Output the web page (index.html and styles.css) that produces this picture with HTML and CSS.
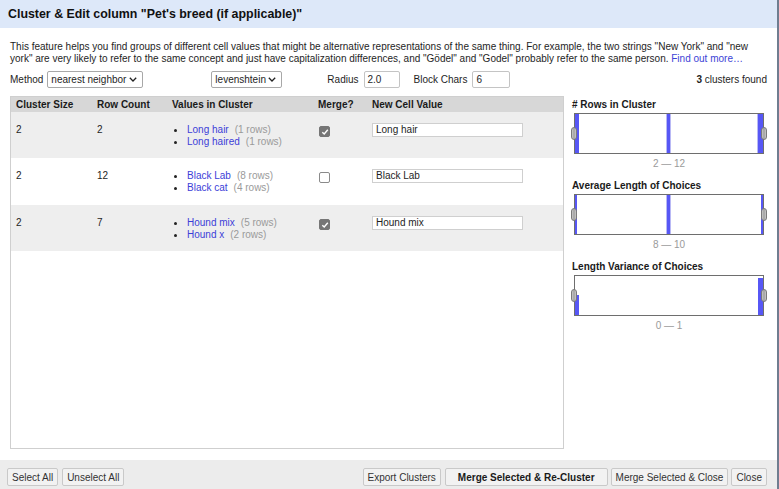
FILE: index.html
```html
<!DOCTYPE html>
<html>
<head>
<meta charset="utf-8">
<link rel="stylesheet" href="styles.css">
</head>
<body>
<div class="dialog">
  <div class="title">Cluster &amp; Edit column "Pet's breed (if applicable)"</div>
  <div class="content">
    <p class="desc">This feature helps you find groups of different cell values that might be alternative representations of the same thing. For example, the two strings "New York" and "new york" are very likely to refer to the same concept and just have capitalization differences, and "Gödel" and "Godel" probably refer to the same person. <a href="#" class="link">Find out more…</a></p>
    <div class="controls">
      <span class="label">Method</span>
      <span class="select sel-method"><span>nearest neighbor</span><svg width="8" height="5" viewBox="0 0 8 5"><path d="M0.8 0.8 L4 4 L7.2 0.8" fill="none" stroke="#222" stroke-width="1.3"/></svg></span>
      <span class="select sel-func"><span>levenshtein</span><svg width="8" height="5" viewBox="0 0 8 5"><path d="M0.8 0.8 L4 4 L7.2 0.8" fill="none" stroke="#222" stroke-width="1.3"/></svg></span>
      <span class="label lbl-radius">Radius</span>
      <span class="tinput in-radius">2.0</span>
      <span class="label lbl-block">Block Chars</span>
      <span class="tinput in-block">6</span>
      <span class="found"><b>3</b> clusters found</span>
    </div>
    <div class="main">
      <div class="table-wrap">
        <table class="clusters">
          <colgroup><col class="c1"><col class="c2"><col class="c3"><col class="c4"><col class="c5"></colgroup>
          <thead>
            <tr><th>Cluster Size</th><th>Row Count</th><th>Values in Cluster</th><th>Merge?</th><th>New Cell Value</th></tr>
          </thead>
          <tbody>
            <tr class="odd">
              <td>2</td><td>2</td>
              <td><ul class="vals"><li><a href="#">Long hair</a><span class="cnt">(1 rows)</span></li><li><a href="#">Long haired</a><span class="cnt">(1 rows)</span></li></ul></td>
              <td><span class="cb checked"><svg width="8" height="8" viewBox="0 0 8 8"><path d="M1.3 4.2 L3.2 6 L6.8 1.8" fill="none" stroke="#fff" stroke-width="1.4"/></svg></span></td>
              <td><span class="cell-input">Long hair</span></td>
            </tr>
            <tr class="even">
              <td>2</td><td>12</td>
              <td><ul class="vals"><li><a href="#">Black Lab</a><span class="cnt">(8 rows)</span></li><li><a href="#">Black cat</a><span class="cnt">(4 rows)</span></li></ul></td>
              <td><span class="cb"></span></td>
              <td><span class="cell-input">Black Lab</span></td>
            </tr>
            <tr class="odd">
              <td>2</td><td>7</td>
              <td><ul class="vals"><li><a href="#">Hound mix</a><span class="cnt">(5 rows)</span></li><li><a href="#">Hound x</a><span class="cnt">(2 rows)</span></li></ul></td>
              <td><span class="cb checked"><svg width="8" height="8" viewBox="0 0 8 8"><path d="M1.3 4.2 L3.2 6 L6.8 1.8" fill="none" stroke="#fff" stroke-width="1.4"/></svg></span></td>
              <td><span class="cell-input">Hound mix</span></td>
            </tr>
          </tbody>
        </table>
      </div>
      <div class="facets">
        <div class="facet">
          <div class="facet-title"># Rows in Cluster</div>
          <div class="hist">
            <svg width="190" height="41" viewBox="0 0 190 41">
              <rect x="0.5" y="0.5" width="189" height="40" fill="#fff" stroke="#6e6e6e"/>
              <rect x="1" y="1" width="4" height="39" fill="#5757f5"/>
              <rect x="92" y="1" width="5" height="39" fill="#b9b9f5"/>
              <rect x="93" y="1" width="3" height="39" fill="#5757f5"/>
              <rect x="184" y="1" width="5" height="39" fill="#5757f5"/>
              <rect x="183" y="1" width="1" height="39" fill="#b9b9f5"/>
            </svg>
            <span class="handle h-left"></span><span class="handle h-right"></span>
          </div>
          <div class="range">2 — 12</div>
        </div>
        <div class="facet">
          <div class="facet-title">Average Length of Choices</div>
          <div class="hist">
            <svg width="190" height="41" viewBox="0 0 190 41">
              <rect x="0.5" y="0.5" width="189" height="40" fill="#fff" stroke="#6e6e6e"/>
              <rect x="1" y="1" width="2" height="39" fill="#5757f5"/>
              <rect x="92" y="1" width="5" height="39" fill="#b9b9f5"/>
              <rect x="93" y="1" width="3" height="39" fill="#5757f5"/>
              <rect x="187" y="1" width="2" height="39" fill="#5757f5"/>
            </svg>
            <span class="handle h-left"></span><span class="handle h-right"></span>
          </div>
          <div class="range">8 — 10</div>
        </div>
        <div class="facet">
          <div class="facet-title">Length Variance of Choices</div>
          <div class="hist">
            <svg width="190" height="41" viewBox="0 0 190 41">
              <rect x="0.5" y="0.5" width="189" height="40" fill="#fff" stroke="#6e6e6e"/>
              <rect x="1" y="20" width="4" height="20" fill="#5757f5"/>
              <rect x="184" y="3" width="5" height="37" fill="#5757f5"/>
            </svg>
            <span class="handle h-left"></span><span class="handle h-right"></span>
          </div>
          <div class="range">0 — 1</div>
        </div>
      </div>
    </div>
  </div>
  <div class="footer">
    <button class="btn">Select All</button>
    <button class="btn btn-unselect">Unselect All</button>
    <span class="spacer"></span>
    <button class="btn">Export Clusters</button>
    <button class="btn primary">Merge Selected &amp; Re-Cluster</button>
    <button class="btn">Merge Selected &amp; Close</button>
    <button class="btn">Close</button>
  </div>
</div>
</body>
</html>
```
FILE: styles.css
```css
html, body {
  margin: 0;
  padding: 0;
  background: #fff;
}
body {
  font-family: "Liberation Sans", Arial, sans-serif;
  font-size: 10px;
  color: #1e1e1e;
}
.dialog {
  width: 777px;
  height: 489px;
  border-right: 2px solid #6f7d90;
  display: flex;
  flex-direction: column;
  background: #fff;
}
.title {
  height: 28px;
  line-height: 29px;
  background: #dde8f9;
  padding-left: 8px;
  font-weight: bold;
  font-size: 12.4px;
  color: #111;
}
.content {
  flex: 1;
  display: flex;
  flex-direction: column;
  padding: 13px 10px 11px 10px;
  min-height: 0;
}
.desc {
  margin: 0;
  line-height: 12px;
}
.link {
  color: #3b43d6;
  text-decoration: none;
}
.controls {
  display: flex;
  align-items: center;
  height: 17px;
  margin-top: 6px;
}
.label { margin-right: 4px; }
.select {
  position: relative;
  display: inline-flex;
  align-items: center;
  justify-content: space-between;
  height: 15px;
  border: 1px solid #a8a8a8;
  border-radius: 2px;
  background: #fff;
  padding: 0 5px 0 3px;
  box-sizing: content-box;
}
.sel-method { width: 86px; }
.sel-func { width: 61px; margin-left: 68px; }
.lbl-radius { margin-left: 45px; margin-right: 5px; }
.tinput {
  display: inline-flex;
  align-items: center;
  height: 15px;
  border: 1px solid #c4c4c4;
  border-radius: 2px;
  padding-left: 3px;
  background: #fff;
}
.in-radius { width: 31px; }
.lbl-block { margin-left: 14px; margin-right: 5px; }
.in-block { width: 33px; }
.found { margin-left: auto; }
.main {
  flex: 1;
  display: flex;
  margin-top: 8px;
  min-height: 0;
}
.table-wrap {
  width: 552px;
  border: 1px solid #cfcfcf;
  background: #fff;
}
.clusters {
  width: 552px;
  border-collapse: collapse;
  table-layout: fixed;
}
.c1 { width: 81px; }
.c2 { width: 75px; }
.c3 { width: 146px; }
.c4 { width: 54px; }
.clusters th {
  background: #d7d7d7;
  text-align: left;
  font-weight: bold;
  padding: 0 5px;
  height: 15px;
  line-height: 15px;
  color: #1a1a1a;
}
.clusters td {
  vertical-align: top;
  padding: 12px 5px 0 5px;
  line-height: 12px;
}
.clusters tbody tr { height: 46px; }
.clusters tbody tr.even { height: 47px; }
.clusters tr.odd td { background: #eeeeee; }
.clusters tr.even td { background: #fff; }
.vals {
  list-style: none;
  margin: 0;
  padding: 0;
}
.vals li {
  display: flex;
  align-items: center;
  height: 12px;
}
.vals li::before {
  content: "";
  width: 3px;
  height: 3px;
  border-radius: 50%;
  background: #222;
  margin: 0 10px 0 2px;
}
.vals a {
  color: #3c3ed8;
  text-decoration: none;
}
.cnt {
  color: #9a9a9a;
  margin-left: 6px;
}
.cb {
  display: inline-flex;
  align-items: center;
  justify-content: center;
  width: 9px;
  height: 9px;
  border: 1px solid #8a8a8a;
  border-radius: 2px;
  background: #fff;
  margin: 2px 0 0 1px;
}
.cb.checked {
  background: #767676;
  border-color: #767676;
}
.cell-input {
  display: flex;
  align-items: center;
  width: 146px;
  height: 12px;
  margin-top: -1px;
  border: 1px solid #cfcfcf;
  background: #fff;
  padding-left: 3px;
}
.facets {
  margin-left: 8px;
  padding-top: 3px;
  width: 196px;
}
.facet { margin-bottom: 10px; }
.facet-title {
  font-weight: bold;
  line-height: 12px;
  color: #1a1a1a;
}
.hist {
  position: relative;
  width: 190px;
  height: 41px;
  margin: 2px 0 0 2px;
}
.hist svg { display: block; }
.handle {
  position: absolute;
  top: 14px;
  width: 4px;
  height: 11px;
  border: 1px solid #7a7a7a;
  border-radius: 3px;
  background: linear-gradient(to right, #c9c9c9, #a0a0a0 50%, #c9c9c9);
}
.h-left { left: -3px; }
.h-right { right: -3px; }
.range {
  width: 190px;
  margin: 4px 0 0 2px;
  text-align: center;
  color: #9a9a9a;
  line-height: 12px;
}
.footer {
  height: 29px;
  background: #ececec;
  display: flex;
  align-items: center;
  padding: 0 10px 0 7px;
  gap: 3px;
}
.spacer { flex: 1; }
.btn {
  font-family: "Liberation Sans", Arial, sans-serif;
  font-size: 10px;
  color: #333;
  height: 18px;
  padding: 0 4px;
  background: #f2f2f2;
  border: 1px solid #c9c9c9;
  border-radius: 2px;
  margin: 0;
  margin-top: 5px;
}
.btn-unselect { margin-left: 1px; }
.btn.primary {
  font-weight: bold;
  color: #1a1a1a;
  padding: 0 12px;
  margin-left: 1px;
}
```
